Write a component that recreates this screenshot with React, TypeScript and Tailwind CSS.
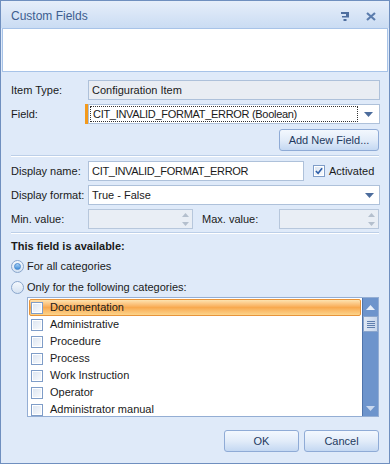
// App.tsx - Custom Fields dialog
import React, { useState } from 'react';

const categories = [
    'Documentation',
    'Administrative',
    'Procedure',
    'Process',
    'Work Instruction',
    'Operator',
    'Administrator manual',
];

const DropArrow = () => (
    <svg width="9" height="5" viewBox="0 0 9 5" className="shrink-0">
        <path d="M0 0 H9 L4.5 5 Z" fill="#4c6c9c" />
    </svg>
);

const SpinBox = ({ className }: { className: string }) => (
    <div className={`h-[20px] border border-[#b7c7dc] bg-[#e9eef5] flex justify-end ${className}`}>
        <div className="w-[14px] flex flex-col items-center justify-center gap-[5px]">
            <svg width="7" height="4" viewBox="0 0 7 4">
                <path d="M0 4 L3.5 0 L7 4 Z" fill="#b4bfcd" />
            </svg>
            <svg width="7" height="4" viewBox="0 0 7 4">
                <path d="M0 0 H7 L3.5 4 Z" fill="#b4bfcd" />
            </svg>
        </div>
    </div>
);

const Separator = () => (
    <div className="h-[2px] border-t border-[#bccfe8] bg-white mr-[10px]" />
);

const Radio = ({ checked }: { checked: boolean }) => (
    <div className="w-[13px] h-[13px] rounded-full border border-[#8aa6cc] bg-gradient-to-b from-[#f4f8fd] to-[#d5e2f2] flex items-center justify-center shrink-0">
        {checked && (
            <div className="w-[7px] h-[7px] rounded-full bg-gradient-to-b from-[#a9d1f6] to-[#3f8fd8] border border-[#4a8ad0]" />
        )}
    </div>
);

const Box = ({ checked }: { checked?: boolean }) => (
    <div className="w-[12px] h-[12px] border border-[#7f9dc8] bg-white flex items-center justify-center shrink-0">
        <div className="w-[8px] h-[8px] bg-gradient-to-br from-[#dde6f2] to-[#f7f9fc] flex items-center justify-center">
            {checked && (
                <svg width="9" height="8" viewBox="0 0 9 8">
                    <path d="M1 4 L3.5 6.5 L8 1" stroke="#2d5da8" strokeWidth="1.8" fill="none" />
                </svg>
            )}
        </div>
    </div>
);

const Button = ({ label, className }: { label: string; className: string }) => (
    <button
        className={`h-[22px] rounded-[3px] border border-[#8fabd6] bg-gradient-to-b from-[#f3f8fe] via-[#e2ecf9] to-[#c4d8f2] text-[#1e3a60] ${className}`}
    >
        {label}
    </button>
);

export default function App() {
    const [selected] = useState(0);

    return (
        <div className="w-[390px] h-[464px] border border-[#6f8fbf] bg-[#dfeaf9] flex flex-col font-['Liberation_Sans',Arial,sans-serif] text-[11px] text-[#1a1a1a] overflow-hidden">
            {/* title bar */}
            <div className="h-[27px] shrink-0 flex items-center justify-between pl-[10px] pr-[13px] bg-gradient-to-b from-[#e6eefa] to-[#cadcf3]">
                <span className="text-[12px] text-[#3d5d8f] pt-[3px]">Custom Fields</span>
                <div className="flex items-center gap-[17px] pt-[3px]">
                    <svg width="8" height="9" viewBox="0 0 8 9">
                        <rect x="0" y="0" width="8" height="2" fill="#4f6f9f" />
                        <rect x="5" y="2" width="3" height="2" fill="#4f6f9f" />
                        <rect x="1" y="4" width="7" height="1.5" fill="#4f6f9f" />
                        <rect x="2.5" y="7" width="3" height="2" fill="#4f6f9f" />
                    </svg>
                    <svg width="10" height="9" viewBox="0 0 10 9">
                        <path d="M1 1 L9 8 M9 1 L1 8" stroke="#5b7cad" strokeWidth="2.2" />
                    </svg>
                </div>
            </div>

            {/* description area */}
            <div className="mx-[1px] h-[44px] shrink-0 bg-white border border-[#a7c3e8]" />

            <div className="flex flex-col pl-[10px]">
                {/* item type */}
                <div className="flex items-center mt-[8px] h-[20px] pr-[9px]">
                    <span className="w-[77px]">Item Type:</span>
                    <div className="flex-1 h-[20px] border border-[#aec1da] bg-[#e9edf3] flex items-center pl-[3px]">
                        Configuration Item
                    </div>
                </div>

                {/* field */}
                <div className="flex items-center mt-[4px] h-[20px] pr-[9px]">
                    <span className="w-[74px]">Field:</span>
                    <div className="w-[3px] h-[20px] bg-[#f39a1c]" />
                    <div className="flex-1 h-[20px] border border-[#aec1da] bg-white flex items-center p-[1px]">
                        <div className="flex-1 h-full border border-dotted border-[#333] flex items-center pl-[2px] tracking-[-0.3px]">
                            CIT_INVALID_FORMAT_ERROR (Boolean)
                        </div>
                        <div className="w-[20px] flex justify-center">
                            <DropArrow />
                        </div>
                    </div>
                </div>

                <div className="flex justify-end mt-[5px] pr-[10px]">
                    <Button label="Add New Field..." className="w-[100px]" />
                </div>

                <div className="mt-[4px]">
                    <Separator />
                </div>

                {/* display name */}
                <div className="flex items-center mt-[4px] h-[20px] pr-[9px]">
                    <span className="w-[77px]">Display name:</span>
                    <div className="w-[216px] h-[20px] border border-[#aec1da] bg-white flex items-center pl-[3px] tracking-[-0.3px]">
                        CIT_INVALID_FORMAT_ERROR
                    </div>
                    <div className="flex items-center ml-[9px] gap-[4px]">
                        <Box checked />
                        <span>Activated</span>
                    </div>
                </div>

                {/* display format */}
                <div className="flex items-center mt-[4px] h-[20px] pr-[9px]">
                    <span className="w-[77px]">Display format:</span>
                    <div className="flex-1 h-[20px] border border-[#aec1da] bg-white flex items-center pl-[3px]">
                        <span className="flex-1">True - False</span>
                        <div className="w-[20px] flex justify-center">
                            <DropArrow />
                        </div>
                    </div>
                </div>

                {/* min / max */}
                <div className="flex items-center mt-[4px] h-[20px] pr-[10px]">
                    <span className="w-[77px]">Min. value:</span>
                    <SpinBox className="w-[105px]" />
                    <span className="ml-[9px] w-[77px]">Max. value:</span>
                    <SpinBox className="flex-1" />
                </div>

                <div className="mt-[3px]">
                    <Separator />
                </div>

                <div className="mt-[5px] font-bold h-[14px] leading-[14px]">This field is available:</div>

                <div className="flex items-center gap-[3px] mt-[6px] h-[14px]">
                    <Radio checked />
                    <span>For all categories</span>
                </div>
                <div className="flex items-center gap-[3px] mt-[7px] h-[14px]">
                    <Radio checked={false} />
                    <span>Only for the following categories:</span>
                </div>

                {/* categories list */}
                <div className="ml-[16px] mr-[10px] mt-[3px] h-[120px] border border-[#94aed4] bg-white flex">
                    <div className="flex-1 flex flex-col pt-[1px]">
                        {categories.map((c, i) => (
                            <div
                                key={c}
                                className={`h-[17px] flex items-center pl-[1px] gap-[7px] ${
                                    i === selected
                                        ? 'mx-[1px] rounded-[2px] border border-[#e8943a] bg-gradient-to-b from-[#fde3b0] via-[#f8a94f] to-[#fcd48a]'
                                        : 'mx-[1px] border border-transparent'
                                }`}
                            >
                                <Box />
                                <span>{c}</span>
                            </div>
                        ))}
                    </div>
                    {/* scrollbar */}
                    <div className="w-[16px] bg-[#6d94cc] border-l border-[#4f74ab] flex flex-col items-center">
                        <div className="h-[18px] w-full flex items-center justify-center">
                            <svg width="9" height="5" viewBox="0 0 9 5">
                                <path d="M0 5 L4.5 0 L9 5 Z" fill="#e8eff9" />
                            </svg>
                        </div>
                        <div className="h-[16px] w-[15px] bg-gradient-to-r from-[#dfe8f5] to-[#c8d7ec] border border-[#8aa5cc] flex flex-col items-center justify-center gap-[1px]">
                            <div className="w-[8px] h-[1px] bg-[#5f7fae]" />
                            <div className="w-[8px] h-[1px] bg-[#5f7fae]" />
                            <div className="w-[8px] h-[1px] bg-[#5f7fae]" />
                            <div className="w-[8px] h-[1px] bg-[#5f7fae]" />
                        </div>
                        <div className="flex-1" />
                        <div className="h-[16px] w-full flex items-center justify-center">
                            <svg width="9" height="5" viewBox="0 0 9 5">
                                <path d="M0 0 H9 L4.5 5 Z" fill="#c9d8ee" />
                            </svg>
                        </div>
                    </div>
                </div>

                {/* buttons */}
                <div className="flex justify-end gap-[5px] mt-[13px] pr-[10px]">
                    <Button label="OK" className="w-[75px]" />
                    <Button label="Cancel" className="w-[75px]" />
                </div>
            </div>
        </div>
    );
}
